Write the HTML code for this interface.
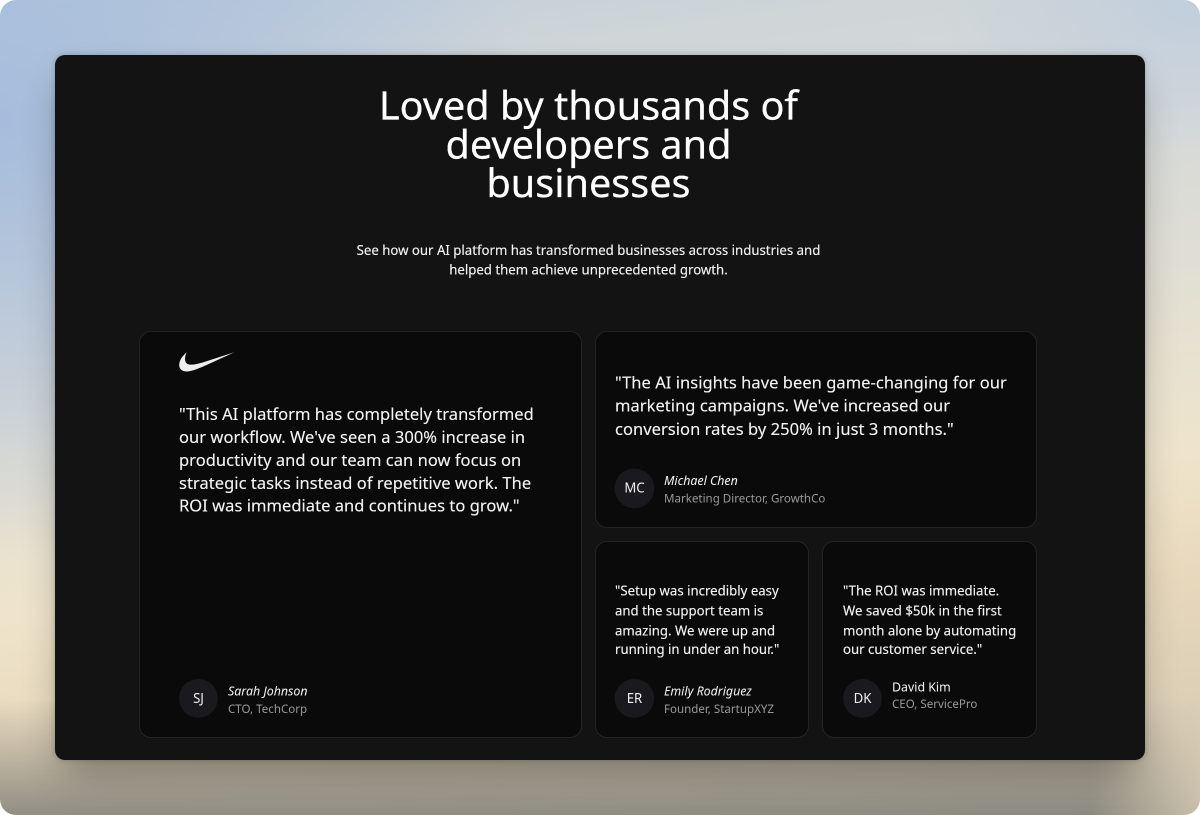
<!DOCTYPE html>
<html><head><meta charset="utf-8">
<style>
*{box-sizing:border-box;margin:0;padding:0}
html,body{width:1200px;height:815px;background:#fff;overflow:hidden}
body{font-family:"Noto Sans","Noto Sans CJK JP","DejaVu Sans",sans-serif;position:relative}
.bg{position:absolute;inset:0;border-radius:16px;overflow:hidden;background:
radial-gradient(ellipse 540px 440px at 0 120px,rgba(165,188,220,1),rgba(165,188,220,0)),
radial-gradient(ellipse 260px 160px at 1200px 0,rgba(188,204,222,.8),rgba(188,204,222,0)),
linear-gradient(172deg,#bccbdb 0%,#d0d6d8 13%,#d4d8d9 25%,#dcdcd6 38%,#e8e2d0 54%,#efe4cb 63%,#e8d9bd 75%,#dccfb6 88%,#c9bfab 100%)}
.bg:after{content:"";position:absolute;left:0;right:0;bottom:0;height:115px;background:linear-gradient(180deg,rgba(125,125,118,0),rgba(125,125,118,.38) 50%,rgba(125,125,118,.8));-webkit-mask-image:linear-gradient(90deg,#000 0,#000 91%,transparent 100%);mask-image:linear-gradient(90deg,#000 0,#000 91%,transparent 100%)}
.panel{position:absolute;left:55px;top:55px;width:1090px;height:705px;background:#131313;border-radius:10px;box-shadow:0 20px 40px -8px rgba(0,0,0,.32),0 0 6px rgba(0,0,0,.2)}
.z{position:absolute;left:0;top:0;width:1454.55px;height:987.9px;transform:scale(.825);transform-origin:0 0}
.t{position:absolute;white-space:nowrap;color:#fff}
.h{left:0;width:1426.67px;text-align:center;font-size:48px;line-height:47.27px;color:#fff;-webkit-text-stroke:.3px #fff}
.s{left:0;width:1426.67px;text-align:center;font-size:16px;line-height:24.24px;color:#f4f4f4;-webkit-text-stroke:.15px #f4f4f4}
.c{position:absolute;background:#0a0a0a;border:1px solid #242424;border-radius:12px}
.q{position:absolute;white-space:nowrap;color:#f4f4f4;-webkit-text-stroke:.15px #f4f4f4}
.q1{font-size:20px;line-height:27.88px;letter-spacing:.045px}
.q2{font-size:16px;line-height:23.64px}
.a{position:absolute;width:47.27px;height:47.27px;border-radius:50%;background:#1a1a1e;color:#f2f2f2;font-size:16px;line-height:47.27px;text-align:center}
.n{position:absolute;white-space:nowrap;font-size:15px;line-height:21.82px;color:#f5f5f5}
.i{font-style:italic}
.r{position:absolute;white-space:nowrap;font-size:14px;line-height:21.82px;color:#999}
</style></head><body>
<div class="bg"></div>
<div class="panel"></div>

<div class="c" style="left:139px;top:331px;width:443px;height:407px"></div>
<div class="c" style="left:595px;top:331px;width:442px;height:197px"></div>
<div class="c" style="left:595px;top:541px;width:214px;height:197px"></div>
<div class="c" style="left:822px;top:541px;width:215px;height:197px"></div>

<svg style="position:absolute;left:179px;top:351px" width="56" height="22" viewBox="0 0 56 22"><path d="M7.6 1.2C3.2 5.2 0 9.6 0.2 14.4C.4 19 4.6 21 9.4 20.4C14.6 19.6 21 16.8 27 14.2L55.4 1.2L24 11.4C18 13.2 13 14.2 9.6 13.4C5.6 12.4 5 7.4 7.6 1.2Z" fill="#eeeeee"/></svg>

<div class="z">
<div class="t h" style="top:103.6px">Loved by thousands of</div>
<div class="t h" style="top:150.7px">developers and</div>
<div class="t h" style="top:198px">businesses</div>
<div class="t s" style="top:290.9px">See how our AI platform has transformed businesses across industries and</div>
<div class="t s" style="top:315.15px">helped them achieve unprecedented growth.</div>

<div class="q q1" style="left:216.97px;top:487.9px">"This AI platform has completely transformed<br>our workflow. We've seen a 300% increase in<br>productivity and our team can now focus on<br>strategic tasks instead of repetitive work. The<br>ROI was immediate and continues to grow."</div>
<div class="a" style="left:216.97px;top:823.03px">SJ</div>
<div class="n i" style="left:276.36px;top:827.88px">Sarah Johnson</div>
<div class="r" style="left:276.36px;top:848.9px">CTO, TechCorp</div>

<div class="q q1" style="left:745.45px;top:450.3px;line-height:27.67px">"The AI insights have been game-changing for our<br>marketing campaigns. We've increased our<br>conversion rates by 250% in just 3 months."</div>
<div class="a" style="left:745.45px;top:568.48px">MC</div>
<div class="n i" style="left:804.85px;top:573.33px">Michael Chen</div>
<div class="r" style="left:804.85px;top:593.94px">Marketing Director, GrowthCo</div>

<div class="q q2" style="left:745.45px;top:705.45px">"Setup was incredibly easy<br>and the support team is<br>amazing. We were up and<br>running in under an hour."</div>
<div class="a" style="left:745.45px;top:823.03px">ER</div>
<div class="n i" style="left:804.85px;top:827.88px">Emily Rodriguez</div>
<div class="r" style="left:804.85px;top:848.9px">Founder, StartupXYZ</div>

<div class="q q2" style="left:1021.82px;top:705.45px">"The ROI was immediate.<br>We saved $50k in the first<br>month alone by automating<br>our customer service."</div>
<div class="a" style="left:1021.82px;top:823.03px">DK</div>
<div class="n" style="left:1081.21px;top:822.5px">David Kim</div>
<div class="r" style="left:1081.21px;top:843.2px">CEO, ServicePro</div>
</div>
</body></html>
